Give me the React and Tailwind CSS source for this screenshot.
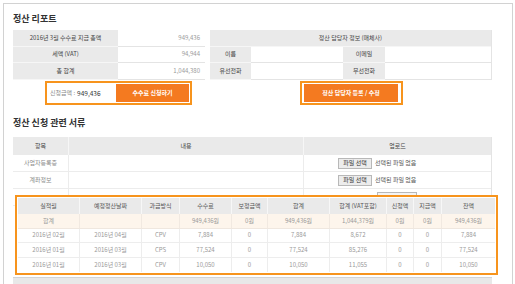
import React from "react";

const leftRows = [
  ["2016년 3월 수수료 지급 총액", "949,436"],
  ["세액 (VAT)", "94,944"],
  ["총 합계", "1,044,380"],
];

const headers = ["실적월", "예정정산날짜", "과금방식", "수수료", "보정금액", "합계", "합계 (VAT포함)", "신청액", "지급액", "잔액"];
const total = ["합계", "", "", "949,436원", "0원", "949,436원", "1,044,379원", "0원", "0원", "949,436원"];
const rows = [
  ["2016년 02월", "2016년 04월", "CPV", "7,884", "0", "7,884", "8,672", "0", "0", "7,884"],
  ["2016년 01월", "2016년 03월", "CPS", "77,524", "0", "77,524", "85,276", "0", "0", "77,524"],
  ["2016년 01월", "2016년 03월", "CPV", "10,050", "0", "10,050", "11,055", "0", "0", "10,050"],
];

const grid = "grid grid-cols-[62px_62px_38px_52px_36px_62px_57px_27px_28px_53px]";

function FileBtn() {
  return (
    <div className="flex items-center">
      <span className="h-[11px] w-[34px] border border-[#b8b8b8] bg-[#ececec] text-[#333] flex items-center justify-center leading-none">파일 선택</span>
      <span className="ml-[3px] text-[#555]">선택된 파일 없음</span>
    </div>
  );
}

export default function App() {
  return (
    <div className="relative w-[515px] h-[284px] overflow-hidden bg-white [font-family:'Noto_Sans_CJK_KR','Noto_Sans',sans-serif] text-[6px] leading-none">
      {/* page frame */}
      <div className="ml-[3px] mt-[3px] w-[510px] h-[300px] border border-[#d2d2d2] pl-[9px] pr-[20px]">
        {/* title */}
        <div className="h-[26px] pt-[9px]">
          <h2 className="text-[9px] leading-[12px] font-bold text-[#333]">정산 리포트</h2>
        </div>

        {/* report tables */}
        <div className="flex gap-[5px]">
          <div className="w-[192px]">
            {leftRows.map(([l, v]) => (
              <div key={l} className="flex h-[16.5px]">
                <div className="w-[105px] bg-[#eaeaea] border-b border-[#f6f6f6] flex items-center justify-center text-[#444]">{l}</div>
                <div className="flex-1 border-b border-[#e4e4e4] flex items-center justify-end pr-[5px] text-[#9a9a9a]">{v}</div>
              </div>
            ))}
          </div>
          <div className="flex-1 border-r border-[#e4e4e4]">
            <div className="h-[16.5px] bg-[#eaeaea] border-b border-[#f6f6f6] flex items-center justify-center text-[#444]">정산 담당자 정보 (매체사)</div>
            {[["이름", "이메일"], ["유선전화", "무선전화"]].map(([a, b]) => (
              <div key={a} className="flex h-[16.5px]">
                <div className="w-[41px] bg-[#eaeaea] border-b border-[#f6f6f6] flex items-center justify-center text-[#444]">{a}</div>
                <div className="w-[92px] border-b border-[#e4e4e4]"></div>
                <div className="w-[42px] bg-[#eaeaea] border-b border-[#f6f6f6] flex items-center justify-center text-[#444]">{b}</div>
                <div className="flex-1 border-b border-[#e4e4e4]"></div>
              </div>
            ))}
          </div>
        </div>

        {/* action buttons */}
        <div className="flex gap-[5px] mt-[1.5px]">
          <div className="w-[192px] flex">
            <div className="ml-[32px] w-[147px] h-[24px] border-2 border-[#f7941d] flex items-center pl-[3px] pr-[1px]">
              <span className="text-[#8a8a8a]">신청금액 :</span>
              <span className="ml-[2px] text-[#333] text-[6.5px]">949,436</span>
              <button className="ml-auto w-[73px] h-[18px] bg-[#f47a20] text-white font-bold flex items-center justify-center">수수료 신청하기</button>
            </div>
          </div>
          <div className="flex-1 flex justify-center">
            <div className="w-[103px] h-[24px] border-2 border-[#f7941d] flex items-center justify-center">
              <button className="w-[94px] h-[18px] bg-[#f47a20] text-white font-bold flex items-center justify-center">정산 담당자 등록 / 수정</button>
            </div>
          </div>
        </div>

        {/* documents */}
        <div className="h-[32px] pt-[12px]">
          <h2 className="text-[9px] leading-[12px] font-bold text-[#333]">정산 신청 관련 서류</h2>
        </div>
        <div className="border-r border-[#e4e4e4]">
          <div className="flex h-[18px] bg-[#eaeaea] text-[#444]">
            <div className="w-[56px] border-r border-[#f6f6f6] flex items-center justify-center">항목</div>
            <div className="w-[235px] border-r border-[#f6f6f6] flex items-center justify-center">내용</div>
            <div className="flex-1 flex items-center justify-center">업로드</div>
          </div>
          {["사업자등록증", "계좌정보"].map((l) => (
            <div key={l} className="flex h-[17px] border-b border-[#ececec]">
              <div className="w-[56px] border-r border-[#ececec] flex items-center justify-center text-[#8a8a8a]">{l}</div>
              <div className="w-[235px] border-r border-[#ececec]"></div>
              <div className="flex-1 flex items-center pl-[34px]">
                <FileBtn />
              </div>
            </div>
          ))}
          <div className="flex h-[17px] border-b border-[#ececec]">
            <div className="w-[56px] border-r border-[#ececec]"></div>
            <div className="w-[235px] border-r border-[#ececec]"></div>
            <div className="flex-1 flex items-center pl-[73px]">
              <span className="h-[11px] w-[40px] border border-[#b8b8b8] bg-[#f4f4f4]"></span>
            </div>
          </div>
        </div>

        {/* next section (hidden behind the popup) */}
        <div className="h-[71px]"></div>
        <div className="h-[18px] border-t border-[#d4d4d4] bg-[#e8e8e8]"></div>
      </div>

      {/* overlay popup */}
      <div className="absolute left-[15px] top-[195px] w-[483px] border-2 border-[#f7941d] bg-white p-[1px]">
        <div className={`${grid} h-[16px] bg-[#eaeaea] text-[#555]`}>
          {headers.map((h, i) => (
            <div key={i} className={`flex items-center justify-center ${i < 9 ? "border-r border-[#f7f7f7]" : ""}`}>{h}</div>
          ))}
        </div>
        <div className={`${grid} h-[14.5px] bg-[#fdf5ec] border-b border-[#efe7df] text-[#999]`}>
          {total.map((c, i) => (
            <div key={i} className={`flex items-center justify-center ${i < 9 ? "border-r border-[#f1e9e1]" : ""}`}>{c}</div>
          ))}
        </div>
        {rows.map((r, ri) => (
          <div key={ri} className={`${grid} h-[14.5px] ${ri < 2 ? "border-b border-[#ededed]" : ""} text-[#999]`}>
            {r.map((c, i) => (
              <div key={i} className={`flex items-center justify-center ${i < 9 ? "border-r border-[#ededed]" : ""}`}>{c}</div>
            ))}
          </div>
        ))}
      </div>
    </div>
  );
}
